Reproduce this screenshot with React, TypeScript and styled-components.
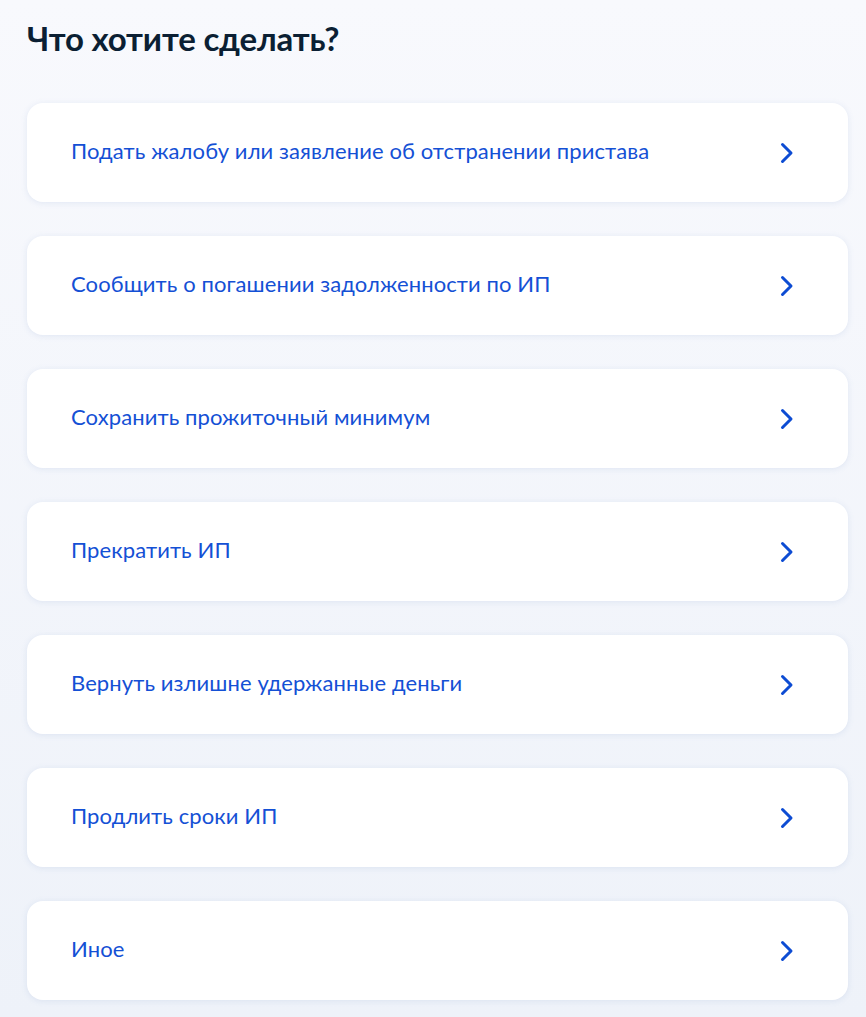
import React from "react";
import styled, { createGlobalStyle } from "styled-components";

const GlobalStyle = createGlobalStyle`
  html, body {
    margin: 0;
    padding: 0;
    background: linear-gradient(180deg, #f8f9fd 0%, #eef2f9 100%);
    min-height: 100%;
  }
  body {
    font-family: Lato, "Noto Sans", sans-serif;
  }
`;

const Page = styled.div`
  padding: 14px 18px 17px 27px;
  min-height: 1017px;
  box-sizing: border-box;
`;

const Title = styled.h2`
  margin: 0 0 41px 0;
  font-size: 33px;
  line-height: 48px;
  font-weight: 700;
  color: #0b1f33;
  letter-spacing: -0.2px;
`;

const List = styled.div`
  display: flex;
  flex-direction: column;
  gap: 34px;
`;

const Card = styled.a`
  display: flex;
  align-items: center;
  justify-content: space-between;
  height: 99px;
  box-sizing: border-box;
  padding: 0 54px 3px 44px;
  background: #ffffff;
  border-radius: 16px;
  box-shadow: 0 1px 6px rgba(102, 134, 189, 0.14);
  text-decoration: none;
  cursor: pointer;
`;

const Label = styled.span`
  font-size: 22px;
  line-height: 28px;
  font-weight: 400;
  letter-spacing: 0.1px;
  color: #1450d5;
`;

const Chevron = styled.svg`
  margin-top: 3px;
  flex-shrink: 0;
`;

const ChevronIcon = () => (
  <Chevron width="14" height="22" viewBox="0 0 14 22" fill="none">
    <path d="M2.5 2.5 L11 11 L2.5 19.5" stroke="#0d4cd3" strokeWidth="3" strokeLinecap="round" strokeLinejoin="round" />
  </Chevron>
);

const items = [
  "Подать жалобу или заявление об отстранении пристава",
  "Сообщить о погашении задолженности по ИП",
  "Сохранить прожиточный минимум",
  "Прекратить ИП",
  "Вернуть излишне удержанные деньги",
  "Продлить сроки ИП",
  "Иное",
];

const App: React.FC = () => {
  return (
    <>
      <GlobalStyle />
      <Page>
        <Title>Что хотите сделать?</Title>
        <List>
          {items.map((text, index) => (
            <Card key={index}>
              <Label>{text}</Label>
              <ChevronIcon />
            </Card>
          ))}
        </List>
      </Page>
    </>
  );
};

export default App;
